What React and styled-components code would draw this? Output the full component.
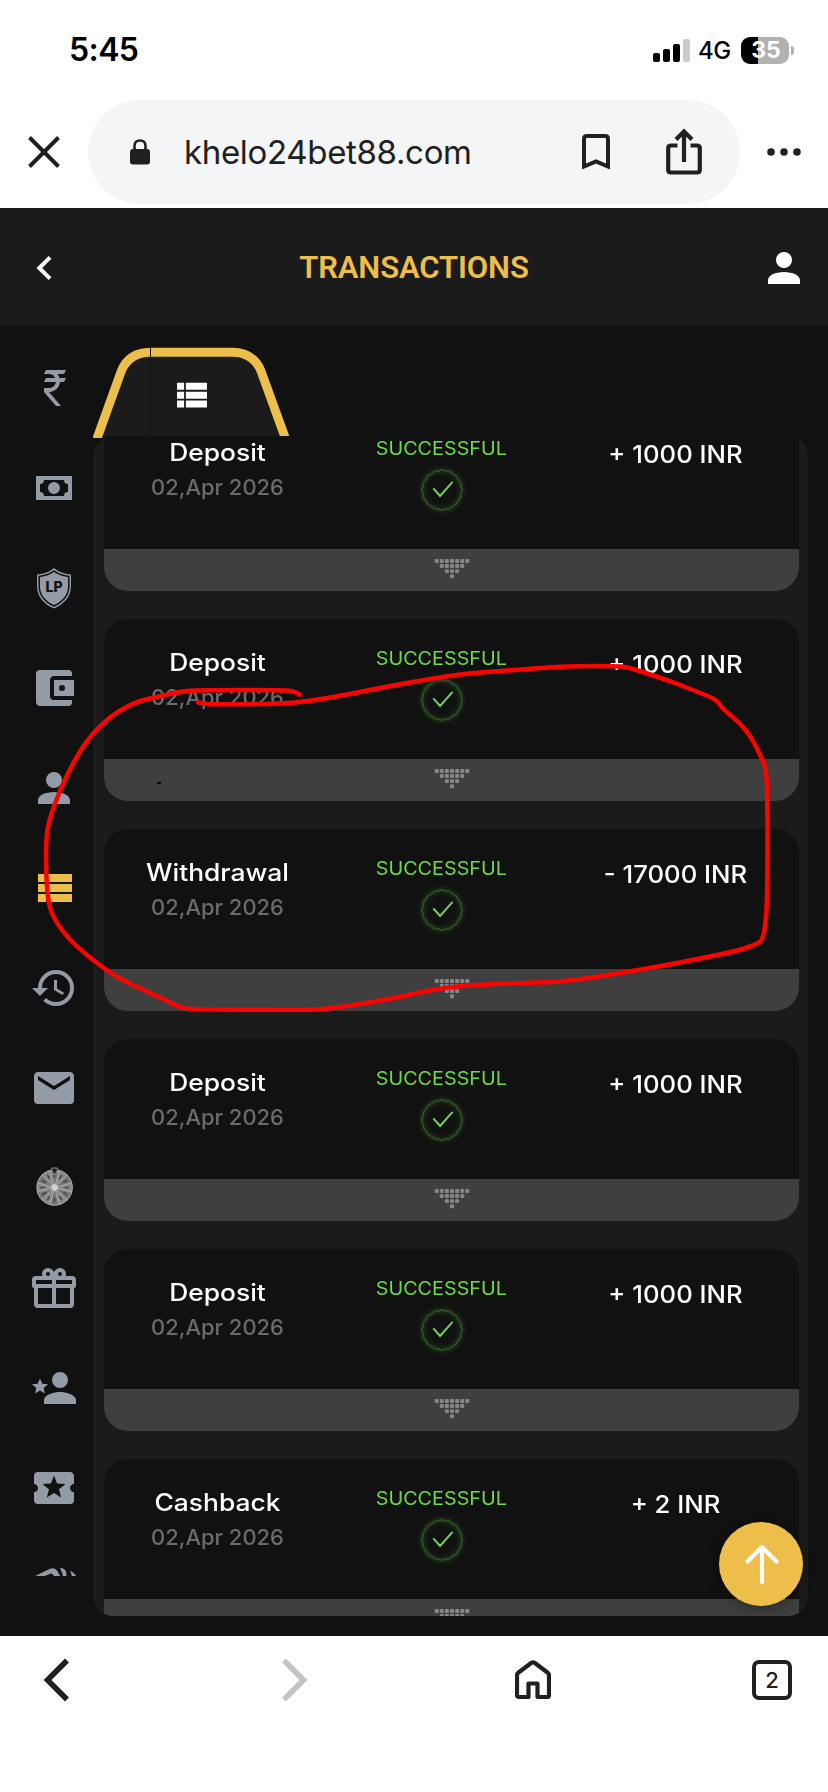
import React from 'react'
import styled, { createGlobalStyle } from 'styled-components'

const GOLD = '#eebe4b'

const icons = {
  rupee: 'M8,3H18L17,5H13.74C14.22,5.58 14.58,6.26 14.79,7H18L17,9H15C14.75,11.57 12.74,13.63 10.2,13.96V14H9.5L15.5,21H13L7,14V12H9.5V12C11.26,12 12.72,10.7 12.96,9H7L8,7H12.66C12.1,5.82 10.9,5 9.5,5H7L8,3Z',
  cash: 'M3,6H21V18H3V6M12,9A3,3 0 0,1 15,12A3,3 0 0,1 12,15A3,3 0 0,1 9,12A3,3 0 0,1 12,9M7,8A2,2 0 0,1 5,10V14A2,2 0 0,1 7,16H17A2,2 0 0,1 19,14V10A2,2 0 0,1 17,8H7Z',
  wallet: 'M21,18V19A2,2 0 0,1 19,21H5C3.89,21 3,20.1 3,19V5A2,2 0 0,1 5,3H19A2,2 0 0,1 21,5V6H12C10.89,6 10,6.9 10,8V16A2,2 0 0,0 12,18M12,16H22V8H12M16,13.5A1.5,1.5 0 0,1 14.5,12A1.5,1.5 0 0,1 16,10.5A1.5,1.5 0 0,1 17.5,12A1.5,1.5 0 0,1 16,13.5Z',
  account: 'M12,4A4,4 0 0,1 16,8A4,4 0 0,1 12,12A4,4 0 0,1 8,8A4,4 0 0,1 12,4M12,14C16.42,14 20,15.79 20,18V20H4V18C4,15.79 7.58,14 12,14Z',
  list: 'M9,5V9H21V5M9,19H21V15H9M9,14H21V10H9M4,9H8V5H4M4,19H8V15H4M4,14H8V10H4V14Z',
  history: 'M13.5,8H12V13L16.28,15.54L17,14.33L13.5,12.25V8M13,3A9,9 0 0,0 4,12H1L4.96,16.03L9,12H6A7,7 0 0,1 13,5A7,7 0 0,1 20,12A7,7 0 0,1 13,19C11.07,19 9.32,18.21 8.06,16.94L6.64,18.36C8.27,20 10.5,21 13,21A9,9 0 0,0 22,12A9,9 0 0,0 13,3',
  email: 'M20,8L12,13L4,8V6L12,11L20,6M20,4H4C2.89,4 2,4.89 2,6V18A2,2 0 0,0 4,20H20A2,2 0 0,0 22,18V6C22,4.89 21.1,4 20,4Z',
  gift: 'M22,12V20A2,2 0 0,1 20,22H4A2,2 0 0,1 2,20V12A1,1 0 0,1 1,11V8A2,2 0 0,1 3,6H6.17C6.06,5.69 6,5.35 6,5A3,3 0 0,1 9,2C10,2 10.88,2.5 11.43,3.24V3.23L12,4L12.57,3.23V3.24C13.12,2.5 14,2 15,2A3,3 0 0,1 18,5C18,5.35 17.94,5.69 17.83,6H21A2,2 0 0,1 23,8V11A1,1 0 0,1 22,12M4,20H11V12H4V20M20,20V12H13V20H20M9,4A1,1 0 0,0 8,5A1,1 0 0,0 9,6A1,1 0 0,0 10,5A1,1 0 0,0 9,4M15,4A1,1 0 0,0 14,5A1,1 0 0,0 15,6A1,1 0 0,0 16,5A1,1 0 0,0 15,4M3,8V10H11V8H3M13,8V10H21V8H13Z',
  referral: 'M15,14C12.33,14 7,15.33 7,18V20H23V18C23,15.33 17.67,14 15,14M15,12A4,4 0 0,0 19,8A4,4 0 0,0 15,4A4,4 0 0,0 11,8A4,4 0 0,0 15,12M5,13.28L7.45,14.77L6.8,11.96L9,10.08L6.11,9.83L5,7.19L3.87,9.83L1,10.08L3.18,11.96L2.5,14.77L5,13.28Z',
  ticket: 'M15.58,16.8L12,14.5L8.42,16.8L9.5,12.68L6.21,10L10.46,9.74L12,5.8L13.54,9.74L17.79,10L14.5,12.68M20,12C20,10.89 20.9,10 22,10V6C22,4.89 21.1,4 20,4H4A2,2 0 0,0 2,6V10C3.11,10 4,10.9 4,12A2,2 0 0,1 2,14V18A2,2 0 0,0 4,20H20A2,2 0 0,0 22,18V14C20.89,14 20,13.1 20,12Z',
}

const transactions = [
  { type: 'Deposit', amount: '+ 1000 INR' },
  { type: 'Deposit', amount: '+ 1000 INR' },
  { type: 'Withdrawal', amount: '- 17000 INR' },
  { type: 'Deposit', amount: '+ 1000 INR' },
  { type: 'Deposit', amount: '+ 1000 INR' },
  { type: 'Cashback', amount: '+ 2 INR' },
]

// freehand marker line round the withdrawal
const marker = [
  [198, 702], [203, 704], [215, 704.3], [280, 704], [310, 701], [345, 695], [400, 684], [460, 674], [507, 670.5],
  [567, 666], [617, 666], [627, 667], [640, 671], [670, 681], [693, 690], [713, 698], [718, 702], [723, 709], [740, 723],
  [752, 738], [760, 755], [765.5, 765], [767.5, 790], [767.5, 893], [765.5, 925], [763, 937], [760, 943],
  [737, 951], [707, 957], [683, 962], [633, 971], [570, 981], [540, 982.5], [490, 984], [460, 986],
  [430, 990], [400, 997], [367, 1003], [322, 1009.5], [300, 1010], [187, 1009.5], [177, 1006], [153, 994],
  [130, 984], [107, 971], [77, 947], [63, 932], [52, 915], [48, 900], [46, 873], [46, 837], [50, 817],
  [60, 790], [73, 763], [87, 740], [103, 723], [117, 712], [138, 701], [157, 697], [180, 691.5],
  [200, 690], [283, 690], [293, 691], [300, 694.5],
]

const smooth = (pts) => {
  let d = `M${pts[0]}`
  for (let i = 1; i < pts.length - 1; i++) {
    const mx = (pts[i][0] + pts[i + 1][0]) / 2
    const my = (pts[i][1] + pts[i + 1][1]) / 2
    d += ` Q${pts[i]} ${mx},${my}`
  }
  return d + ` L${pts[pts.length - 1]}`
}

const Icon = ({ name, size = 48 }) => (
  <svg width={size} height={size} viewBox="0 0 24 24" fill="currentColor">
    <path d={icons[name]} />
  </svg>
)

const Shield = () => (
  <svg width="48" height="48" viewBox="0 0 48 48">
    <path d="M24 4C29 8 34 10 41 10.5V22C41 33 34 40 24 44.500C14 40 7 33 7 22V10.500C14 10 19 8 24 4Z" fill="currentColor" />
    <path d="M24 7.200C29 10.500 33 12 38.800 12.500V22C38.800 31.500 32.500 38 24 42C15.500 38 9.200 31.500 9.200 22V12.500C15 12 19 10.500 24 7.200Z" fill="none" stroke="#111" strokeWidth="1.500" />
    <text x="24" y="27.800" textAnchor="middle" fontFamily="Inter, sans-serif" fontWeight="800" fontSize="14" fill="#111">LP</text>
  </svg>
)

const Wheel = () => (
  <svg width="48" height="48" viewBox="-24 -24 48 48">
    <g transform="translate(.6 -.5)">
      <circle r="18" fill="#898989" />
      {[...Array(12)].map((_, i) => (
        <g key={i} transform={`rotate(${i * 30})`}>
          {i % 2 === 0 && <path d="M0 0L-4.500 -16.800A17.500 17.500 0 0 1 4.500 -16.800Z" fill="#777" />}
          <path d="M0 0L-4.600 -17.400" stroke="#b5b5b5" strokeWidth=".8" />
          <path d="M0 -10V-14.500" stroke="#454545" strokeWidth="1.500" />
        </g>
      ))}
      <circle r="17.700" fill="none" stroke="#a5a5a5" strokeWidth="1" />
      <circle r="3.200" fill="#d2d2d2" />
      <path d="M-2.800 -19.500H2.800V-17L0 -12.500L-2.800 -17Z" fill="#222" stroke="#aaa" strokeWidth=".8" />
    </g>
  </svg>
)

const Handshake = () => (
  <svg width="48" height="48" viewBox="0 0 48 48">
    <path d="M4 12.500L20 4.800Q24 3 27 6.500L30.500 12.500H24.500L21.500 9.300L13.500 12.500ZM30 4C34.500 4 36.500 6 36.500 12.500H33C32.500 9 31 6 30 4ZM40 7C43 8 45 10 46.500 12.500H42C41.500 10.500 41 9 40 7Z" fill="currentColor" />
  </svg>
)

const Check = () => {
  // ring with a rippled edge
  let ring = ''
  for (let a = 0; a <= 360; a += 3) {
    const t = (a * Math.PI) / 180
    const r = 19.7 + 0.4 * Math.cos(16 * t)
    ring += `${a ? 'L' : 'M'}${(30 + r * Math.sin(t)).toFixed(2)} ${(30 - r * Math.cos(t)).toFixed(2)}`
  }
  return (
    <svg width="60" height="60" viewBox="0 0 60 60" fill="none">
      <Glow d={ring} />
      <path d={ring + 'Z'} stroke="#30492b" strokeWidth="1.800" />
      <path d="M21.300 28.300L28.100 36L40.600 21.800" stroke="#74cf5c" strokeWidth="2" />
    </svg>
  )
}

const Dots = () => (
  <svg width="36" height="20" viewBox="0 0 36 20" fill="#868686">
    {[7, 5, 3, 1].map((n, row) =>
      [...Array(n)].map((_, i) => (
        <rect key={`${row}-${i}`} x={16 + (i - (n - 1) / 2) * 5.100} y={row * 5.100} width="4" height="3.900" rx="1" />
      ))
    )}
  </svg>
)

const StatusBar = () => (
  <Status>
    <Time>5:45</Time>
    <Signal>
      <Bar $h={9} />
      <Bar $h={13} />
      <Bar $h={18} />
      <Bar $h={23} $off />
    </Signal>
    <Network>4G</Network>
    <Battery>35</Battery>
    <Nub />
  </Status>
)

const BrowserBar = () => (
  <Browser>
    <CloseSlot>
      <svg width="32" height="32" viewBox="0 0 32 32">
        <path d="M1.500 1.500L30.500 30.500M30.500 1.500L1.500 30.500" stroke="#1f2020" strokeWidth="4" />
      </svg>
    </CloseSlot>
    <Pill>
      <LockSlot>
        <svg width="20" height="26" viewBox="0 0 20 26">
          <rect y="10" width="20" height="15.500" rx="3" fill="#1f2020" />
          <path d="M4.500 12V7Q4.500 1.500 10 1.500T15.500 7V12" fill="none" stroke="#1f2020" strokeWidth="2.600" />
        </svg>
      </LockSlot>
      <Url>khelo24bet88.com</Url>
      <PillIcons>
        <svg width="28" height="36" viewBox="0 0 28 36">
          <path d="M2 32.500V5Q2 2 5 2H23Q26 2 26 5V32.500L14 27.500Z" fill="none" stroke="#1f2020" strokeWidth="4" />
        </svg>
        <svg width="36" height="48" viewBox="0 0 36 48">
          <path d="M11.500 17.500H5Q2.200 17.500 2.200 20V42Q2.200 44.500 5 44.500H31Q33.800 44.500 33.800 42V20Q33.800 17.500 31 17.500H24.500M18 34V4M10 11.500L18 3.500L26 11.500" fill="none" stroke="#1f2020" strokeWidth="4.200" />
        </svg>
      </PillIcons>
    </Pill>
    <svg width="34" height="8" viewBox="0 0 34 8" fill="#1f2020">
      <circle cx="4" cy="4" r="3.800" />
      <circle cx="17" cy="4" r="3.800" />
      <circle cx="30" cy="4" r="3.800" />
    </svg>
  </Browser>
)

const Transaction = ({ type, amount }) => (
  <Card>
    <Details>
      <Kind>
        <Title>{type}</Title>
        <When>02,Apr 2026</When>
      </Kind>
      <State>
        <Success>SUCCESSFUL</Success>
        <Check />
      </State>
      <Amount>{amount}</Amount>
    </Details>
    <Expand>
      <Dots />
    </Expand>
  </Card>
)

const Tab = () => (
  <TabShape>
    <svg width="197" height="92" viewBox="93 346 197 92">
      <path d="M97.500 438L122 370C127 357 138 352 150 352H232C246 352 256 360 260.500 371L285 438Z" fill="#1b1b1b" />
      <path d="M150.500 356V436" stroke="#111" />
      <path d="M97 438.500L121.500 370.500C127 358 137 352.500 150 352.300H232C246 352.300 256 359 261 371L285.300 438" fill="none" stroke={GOLD} strokeWidth="8.900" />
      <path d="M150.500 347V357" stroke="#111" strokeWidth="1" />
      <path d="M93 436H290V438H102Z" fill="#111" />
      <path d="M93 438L94.500 434H103L102 438Z" fill={GOLD} />
      <svg x="170" y="374" width="42.300" height="42.300" viewBox="0 0 24 24">
        <path d={icons.list} fill="#fff" />
      </svg>
    </svg>
  </TabShape>
)

const App = () => {
  return (
    <>
      <GlobalStyle />
      <Phone>
        <StatusBar />
        <BrowserBar />
        <Header>
          <svg width="16" height="26" viewBox="0 0 16 26">
            <path d="M14 2.300L3.300 13L14 23.700" fill="none" stroke="#fff" strokeWidth="4" />
          </svg>
          <Heading>TRANSACTIONS</Heading>
          <Icon name="account" />
        </Header>
        <Body>
          <Sidebar>
            <Item><Icon name="rupee" /></Item>
            <Item><Icon name="cash" /></Item>
            <Item><Shield /></Item>
            <Item><Icon name="wallet" /></Item>
            <Item><Icon name="account" /></Item>
            <Item $active><Icon name="list" /></Item>
            <Item><Icon name="history" /></Item>
            <Item><Icon name="email" /></Item>
            <Item><Wheel /></Item>
            <Item><Icon name="gift" /></Item>
            <Item><Icon name="referral" /></Item>
            <Item><Icon name="ticket" /></Item>
            <Item><Handshake /></Item>
          </Sidebar>
          <Content>
            <Tab />
            <Panel>
              <List>
                {transactions.map((t, i) => (
                  <Transaction key={i} type={t.type} amount={t.amount} />
                ))}
              </List>
            </Panel>
          </Content>
        </Body>
        <Toolbar>
          <svg width="28" height="44" viewBox="0 0 28 44">
            <path d="M24 2.500L4.500 22L24 41.500" fill="none" stroke="#1f2020" strokeWidth="5.600" />
          </svg>
          <svg width="28" height="44" viewBox="0 0 28 44">
            <path d="M4 2.500L23.500 22L4 41.500" fill="none" stroke="#c0c3c7" strokeWidth="5.600" />
          </svg>
          <svg width="36" height="40" viewBox="0 0 36 40">
            <path d="M2 15.500Q2 13.500 3.500 12.500L16.500 2.700Q18 1.800 19.500 2.700L32.500 12.500Q34 13.500 34 15.500V35Q34 37 32 37H22.500V23.500H13.500V37H4Q2 37 2 35Z" fill="none" stroke="#1f2020" strokeWidth="4.200" strokeLinejoin="round" />
          </svg>
          <TabCount>2</TabCount>
        </Toolbar>
        <ScrollTop>
          <svg width="36" height="42" viewBox="0 0 36 42">
            <path d="M19 39V4M4.500 18.500L19 4L33.500 18.500" fill="none" stroke="#fff" strokeWidth="4.200" strokeLinecap="round" strokeLinejoin="round" />
          </svg>
        </ScrollTop>
        <Marker viewBox="0 0 828 1792">
          <path d={smooth(marker)} />
          <rect x="157" y="782" width="4" height="2" rx="1" />
        </Marker>
      </Phone>
    </>
  )
}

export default App

// STYLED COMPONENTS /////////////////////

const GlobalStyle = createGlobalStyle`
  * { box-sizing: border-box; }
  body { margin: 0; background: #fff; }
  svg { display: block; flex: none; }
`

const Phone = styled.div`
  position: relative;
  display: flex;
  flex-direction: column;
  width: 828px;
  height: 1792px;
  overflow: hidden;
  font-family: Inter, 'Liberation Sans', sans-serif;
`

const Status = styled.div`
  display: flex;
  align-items: center;
  height: 100px;
  padding: 0 34px 0 69px;
`

const Time = styled.span`
  margin-right: auto;
  font-size: 32px;
  font-weight: 600;
  line-height: 40px;
  letter-spacing: -0.6px;
`

const Signal = styled.div`
  display: flex;
  align-items: flex-end;
  gap: 3px;
  height: 23px;
`

const Bar = styled.span`
  width: 7px;
  height: ${(p) => p.$h}px;
  border-radius: 2px;
  background: ${(p) => (p.$off ? '#cbcbcb' : '#000')};
`

const Network = styled.span`
  width: 34px;
  margin: 1px 9px 0 8px;
  font-size: 24px;
  font-weight: 500;
  line-height: 30px;
  letter-spacing: -0.5px;
  white-space: nowrap;
`

const Battery = styled.span`
  width: 48px;
  height: 27px;
  border-radius: 9px;
  background: linear-gradient(90deg, #000 17px, #b1b1b1 17px);
  color: #fff;
  font-size: 23px;
  font-weight: 700;
  line-height: 27px;
  padding-left: 2px;
  text-align: center;
`

const Nub = styled.span`
  width: 3px;
  height: 9px;
  margin-left: 2px;
  border-radius: 0 4px 4px 0;
  background: #b1b1b1;
`

const Browser = styled.div`
  display: flex;
  align-items: center;
  height: 108px;
  padding-bottom: 4px;
`

const CloseSlot = styled.div`
  width: 88px;
  padding-left: 27.500px;
`

const Pill = styled.div`
  display: flex;
  align-items: center;
  width: 652px;
  height: 104px;
  margin-right: 27px;
  padding: 0 38px 0 42px;
  border-radius: 52px;
  background: #f4f5f7;
`

const LockSlot = styled.div`
  width: 54px;
`

const Url = styled.span`
  color: #1f2020;
  font-size: 33px;
  line-height: 44px;
  letter-spacing: -0.33px;
`

const PillIcons = styled.div`
  display: flex;
  align-items: center;
  gap: 56px;
  margin-left: auto;
`

const Header = styled.header`
  display: flex;
  align-items: center;
  justify-content: space-between;
  height: 118px;
  padding: 2px 20px 0 36px;
  background: #1b1b1b;
  color: #fff;
`

const Heading = styled.h1`
  margin: 0 0 0 16px;
  color: ${GOLD};
  font: 600 31px/40px Roboto, 'Liberation Sans', sans-serif;
  letter-spacing: -0.1px;
`

const Body = styled.div`
  display: flex;
  height: 1310px;
  background: #111;
`

const Sidebar = styled.nav`
  width: 93px;
  height: 1250px;
  padding: 12px 0 0 4px;
  overflow: hidden;
`

const Item = styled.div`
  display: flex;
  align-items: center;
  justify-content: center;
  width: 100px;
  height: 100px;
  color: ${(p) => (p.$active ? GOLD : '#939ca6')};
`

const Content = styled.main`
  display: flex;
  flex-direction: column;
  width: 715px;
  padding: 20px 0;
`

const TabShape = styled.div`
  height: 90px;
`

const Panel = styled.section`
  height: 1180px;
  padding: 0 9px 0 11px;
  border-radius: 20px;
  background: #1b1b1b;
  overflow: hidden;
`

/* scrolled 27px past the top of the first card */
const List = styled.div`
  display: flex;
  flex-direction: column;
  gap: 28px;
  margin-top: -27px;
`

const Card = styled.article`
  height: 182px;
  flex: none;
  border-radius: 24px;
  background: #111;
  overflow: hidden;
`

const Details = styled.div`
  display: grid;
  grid-template-columns: 227px 221px 247px;
  height: 140px;
  text-align: center;
  white-space: nowrap;
`

const Kind = styled.div`
  padding-top: 29px;
`

const Title = styled.div`
  color: #fff;
  font-size: 24px;
  font-weight: 450;
  line-height: 30px;
  transform: scaleX(1.1);
`

const When = styled.div`
  margin-top: 4px;
  color: #6b6b6b;
  font-size: 21.500px;
  font-weight: 450;
  line-height: 30px;
  transform: scaleX(1.02);
`

const State = styled.div`
  display: flex;
  flex-direction: column;
  align-items: center;
  padding-top: 24px;
`

const Success = styled.div`
  margin-bottom: -3px;
  color: #6ddc47;
  font-size: 18.500px;
  font-weight: 400;
  line-height: 30px;
  transform: scaleX(1.07);
`

const Glow = styled.path`
  stroke: #245418;
  stroke-width: 4;
  opacity: 0.6;
  filter: blur(2px);
`

const Amount = styled.div`
  padding-top: 31px;
  color: #fff;
  font-size: 24px;
  font-weight: 450;
  line-height: 30px;
  transform: scaleX(1.07);
`

const Expand = styled.div`
  display: flex;
  justify-content: center;
  height: 42px;
  padding-top: 10px;
  background: #3f3f3f;
`

const Toolbar = styled.footer`
  display: grid;
  grid-template-columns: 237px 235px 237px 40px;
  align-items: center;
  height: 88px;
  padding-left: 43px;
  background: #fff;
`

const TabCount = styled.span`
  width: 40px;
  height: 40px;
  border: 4px solid #1f2020;
  border-radius: 7px;
  color: #1f2020;
  font-size: 22px;
  font-weight: 500;
  line-height: 32px;
  text-align: center;
`

const ScrollTop = styled.button`
  position: absolute;
  right: 25px;
  bottom: 186px;
  display: flex;
  align-items: center;
  justify-content: center;
  width: 84px;
  height: 84px;
  padding: 0;
  border: 0;
  border-radius: 50%;
  background: ${GOLD};
  box-shadow: 0 3px 14px rgba(0, 0, 0, 0.3);
`

const Marker = styled.svg`
  position: absolute;
  inset: 0;
  width: 828px;
  height: 1792px;
  pointer-events: none;

  path {
    fill: none;
    stroke: #fb0300;
    stroke-width: 4.5;
    stroke-linecap: round;
    stroke-linejoin: round;
  }
`
